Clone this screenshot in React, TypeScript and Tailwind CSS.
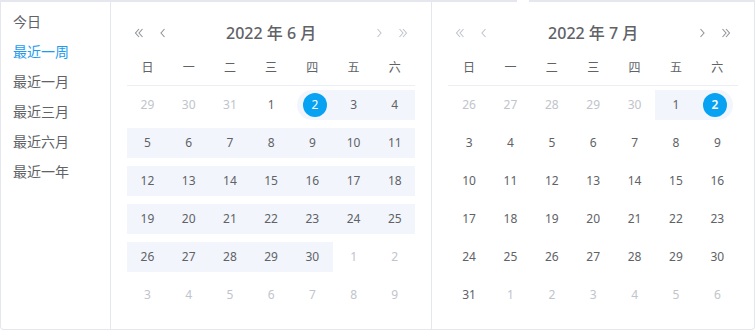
import React from 'react';

const FONT = { fontFamily: '"Noto Sans", "Noto Sans CJK SC", sans-serif' };
const WEEK = ['日', '一', '二', '三', '四', '五', '六'];
const SHORTCUTS = ['今日', '最近一周', '最近一月', '最近三月', '最近六月', '最近一年'];

type Cell = { d: number; other?: boolean; band?: boolean; start?: boolean; end?: boolean };

function buildMonth(prevDays: number[], count: number, nextCount: number, inRange: (d: number) => boolean, start?: number, end?: number): Cell[][] {
  const cells: Cell[] = [];
  prevDays.forEach((d) => cells.push({ d, other: true }));
  for (let d = 1; d <= count; d++) {
    cells.push({ d, band: inRange(d), start: d === start, end: d === end });
  }
  for (let d = 1; d <= nextCount; d++) cells.push({ d, other: true });
  const rows: Cell[][] = [];
  for (let i = 0; i < 42; i += 7) rows.push(cells.slice(i, i + 7));
  return rows;
}

const JUNE = buildMonth([29, 30, 31], 30, 9, (d) => d >= 2, 2);
const JULY = buildMonth([26, 27, 28, 29, 30], 31, 6, (d) => d <= 2, undefined, 2);

function DoubleArrow({ dir, light }: { dir: 'l' | 'r'; light?: boolean }) {
  return (
    <svg width="12" height="12" viewBox="0 0 12 12" className={light ? 'text-[#c0c4cc]' : 'text-[#909399]'}>
      <g fill="none" stroke="currentColor" strokeWidth="1.1" transform={dir === 'r' ? 'matrix(-1 0 0 1 12 0)' : undefined}>
        <path d="M6 2 L2.5 6 L6 10" />
        <path d="M9.5 2 L6 6 L9.5 10" />
      </g>
    </svg>
  );
}

function SingleArrow({ dir, light }: { dir: 'l' | 'r'; light?: boolean }) {
  return (
    <svg width="12" height="12" viewBox="0 0 12 12" className={light ? 'text-[#c0c4cc]' : 'text-[#909399]'}>
      <path
        d="M7.5 2 L4 6 L7.5 10"
        fill="none"
        stroke="currentColor"
        strokeWidth="1.1"
        transform={dir === 'r' ? 'matrix(-1 0 0 1 12 0)' : undefined}
      />
    </svg>
  );
}

function DayCell({ c }: { c: Cell }) {
  const band = c.band
    ? `bg-[#f2f6fc] ${c.start ? 'ml-[5px] rounded-l-[15px]' : ''} ${c.end ? 'mr-[5px] rounded-r-[15px]' : ''}`
    : '';
  const selected = c.start || c.end;
  return (
    <div className="py-[4px]">
      <div className={`h-[30px] flex items-center justify-center ${band}`}>
        <span
          className={`w-[24px] h-[24px] rounded-full flex items-center justify-center text-[12px] ${
            selected ? 'bg-[#07a2f2] text-white' : c.other ? 'text-[#c0c4cc]' : 'text-[#606266]'
          } ${c.end ? 'font-semibold' : ''}`}
        >
          {c.d}
        </span>
      </div>
    </div>
  );
}

function Panel({ title, rows, leftLight, rightLight, border }: { title: string; rows: Cell[][]; leftLight?: boolean; rightLight?: boolean; border?: boolean }) {
  return (
    <div className={`w-[322px] px-[16px] pt-[17px] ${border ? 'border-r border-[#e4e7ed]' : ''}`}>
      <div className="h-[28px] flex items-center">
        <div className="flex items-center gap-[12px] pl-[6px]">
          <DoubleArrow dir="l" light={leftLight} />
          <SingleArrow dir="l" light={leftLight} />
        </div>
        <div className="flex-1 text-center text-[16px] font-medium text-[#606266]">{title}</div>
        <div className="flex items-center gap-[12px] pr-[6px]">
          <SingleArrow dir="r" light={rightLight} />
          <DoubleArrow dir="r" light={rightLight} />
        </div>
      </div>
      <div className="mt-[3px] grid grid-cols-7 h-[36px] items-center border-b border-[#ebeef5]">
        {WEEK.map((w) => (
          <div key={w} className="text-center text-[12px] text-[#606266]">
            {w}
          </div>
        ))}
      </div>
      {rows.map((r, i) => (
        <div key={i} className="grid grid-cols-7">
          {r.map((c, j) => (
            <DayCell key={j} c={c} />
          ))}
        </div>
      ))}
    </div>
  );
}

export default function App() {
  return (
    <div className="w-[756px] h-[333px] bg-white overflow-hidden" style={FONT}>
      <div className="relative w-[755px] h-[330px] flex border-x border-b border-t-2 border-[#e4e7ed] rounded-b-[4px] bg-white">
        <span className="absolute -top-[2px] left-[516px] w-[12px] h-[2px] bg-white" />
        <div className="w-[110px] border-r border-[#e4e7ed] pt-[5px]">
          {SHORTCUTS.map((s, i) => (
            <div key={s} className={`h-[30px] leading-[30px] pl-[12px] text-[14px] ${i === 1 ? 'text-[#1d9bf0]' : 'text-[#606266]'}`}>
              {s}
            </div>
          ))}
        </div>
        <Panel title="2022 年 6 月" rows={JUNE} rightLight border />
        <Panel title="2022 年 7 月" rows={JULY} leftLight />
      </div>
    </div>
  );
}
